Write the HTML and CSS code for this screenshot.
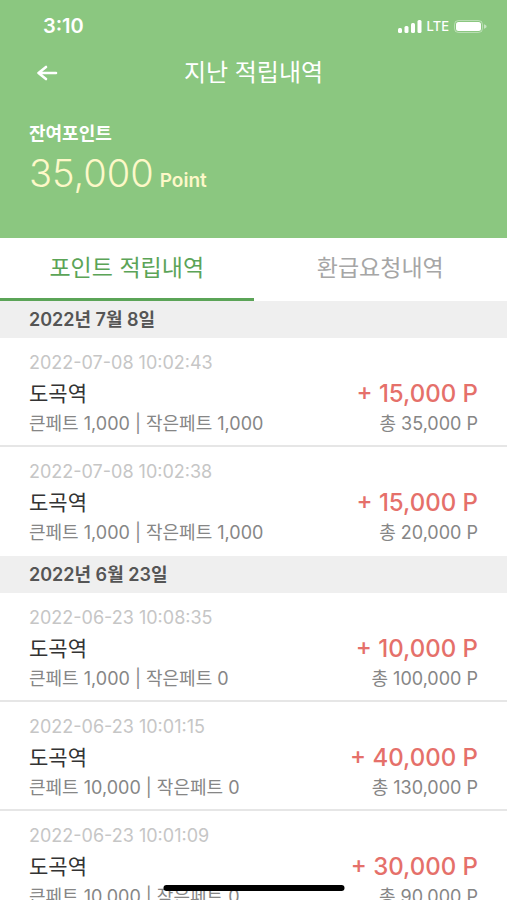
FILE: index.html
```html
<!DOCTYPE html>
<html lang="ko">
<head>
  <meta charset="UTF-8" />
  <meta name="viewport" content="width=device-width, initial-scale=1.0" />
  <title>지난 적립내역</title>
  <link rel="stylesheet" href="styles.css">
</head>
<body>
  <header class="header">
    <div class="status-bar">
      <span class="status-time">3:10</span>
      <div class="status-icons">
        <svg width="24" height="13" viewBox="0 0 24 13" fill="#fff" aria-hidden="true">
          <rect x="0" y="8" width="4" height="5" rx="1.5" />
          <rect x="6.5" y="6" width="4" height="7" rx="1.5" />
          <rect x="13" y="3" width="4" height="10" rx="1.5" />
          <rect x="19.5" y="0" width="4" height="13" rx="1.5" />
        </svg>
        <span class="status-network">LTE</span>
        <svg width="33" height="13" viewBox="0 0 33 13" aria-hidden="true">
          <rect x="0.5" y="0.5" width="28" height="12" rx="4" fill="none" stroke="#fff" stroke-opacity="0.4" />
          <rect x="2" y="2" width="25" height="9" rx="2.5" fill="#fff" />
          <path d="M30 4.2c1.6.5 2.6 1.3 2.6 2.3s-1 1.8-2.6 2.3z" fill="#fff" fill-opacity="0.5" />
        </svg>
      </div>
    </div>
    <div class="title-bar">
      <button class="back" type="button" aria-label="뒤로">
        <svg width="22" height="16" viewBox="0 0 22 16" fill="none" stroke="#fff" stroke-width="2.6" stroke-linecap="round" stroke-linejoin="round" aria-hidden="true">
          <path d="M20 8H2.500M10 2 2.500 8l7.500 6" />
        </svg>
      </button>
      <h1 class="title">지난 적립내역</h1>
    </div>
    <div class="balance">
      <p class="balance-label">잔여포인트</p>
      <p class="balance-value">35,000<span class="balance-unit">Point</span></p>
    </div>
  </header>

  <nav class="tabs">
    <a class="tab active" href="#points">포인트 적립내역</a>
    <a class="tab" href="#refunds">환급요청내역</a>
  </nav>

  <main class="history" id="points">
    <section>
      <h2 class="day">2022년 7월 8일</h2>
      <ul class="list">
        <li class="item">
          <time class="item-time">2022-07-08 10:02:43</time>
          <div class="row">
            <span class="place">도곡역</span>
            <span class="amount">+ 15,000 P</span>
          </div>
          <div class="row detail">
            <span>큰페트 1,000 | 작은페트 1,000</span>
            <span>총 35,000 P</span>
          </div>
        </li>
        <li class="item">
          <time class="item-time">2022-07-08 10:02:38</time>
          <div class="row">
            <span class="place">도곡역</span>
            <span class="amount">+ 15,000 P</span>
          </div>
          <div class="row detail">
            <span>큰페트 1,000 | 작은페트 1,000</span>
            <span>총 20,000 P</span>
          </div>
        </li>
      </ul>
    </section>
    <section>
      <h2 class="day">2022년 6월 23일</h2>
      <ul class="list">
        <li class="item">
          <time class="item-time">2022-06-23 10:08:35</time>
          <div class="row">
            <span class="place">도곡역</span>
            <span class="amount">+ 10,000 P</span>
          </div>
          <div class="row detail">
            <span>큰페트 1,000 | 작은페트 0</span>
            <span>총 100,000 P</span>
          </div>
        </li>
        <li class="item">
          <time class="item-time">2022-06-23 10:01:15</time>
          <div class="row">
            <span class="place">도곡역</span>
            <span class="amount">+ 40,000 P</span>
          </div>
          <div class="row detail">
            <span>큰페트 10,000 | 작은페트 0</span>
            <span>총 130,000 P</span>
          </div>
        </li>
        <li class="item">
          <time class="item-time">2022-06-23 10:01:09</time>
          <div class="row">
            <span class="place">도곡역</span>
            <span class="amount">+ 30,000 P</span>
          </div>
          <div class="row detail">
            <span>큰페트 10,000 | 작은페트 0</span>
            <span>총 90,000 P</span>
          </div>
        </li>
      </ul>
    </section>
  </main>
  <div class="home-indicator"></div>
</body>
</html>
```
FILE: styles.css
```css
:root {
  --green: #8bc780;
  --green-dark: #5ba457;
  --cream: #fdf8c8;
  --red: #e5706a;
  --gray: #868686;
  --gray-light: #c6c6c6;
  --side: 29px;
}

* {
  margin: 0;
  padding: 0;
  box-sizing: border-box;
}

body {
  height: 100vh;
  display: flex;
  flex-direction: column;
  overflow: hidden;
  background: #fff;
  color: #333;
  font-family: Inter, "Noto Sans CJK KR", sans-serif;
}

/* Header */
.header {
  flex: none;
  padding-bottom: 38px;
  background: var(--green);
  color: #fff;
}

.status-bar {
  display: flex;
  justify-content: space-between;
  align-items: center;
  height: 52px;
  padding: 0 20px 0 43px;
}

.status-time {
  font-size: 20px;
  font-weight: 600;
}

.status-icons {
  display: flex;
  align-items: center;
  gap: 5px;
}

.status-network {
  font-size: 13px;
  font-weight: 500;
}

.title-bar {
  display: grid;
  grid-template-columns: 66px 1fr 66px;
  align-items: center;
  height: 42px;
}

.back {
  display: flex;
  justify-content: flex-end;
  padding: 8px;
  border: 0;
  background: none;
  cursor: pointer;
}

.title {
  font-size: 24px;
  font-weight: 400;
  line-height: 34px;
  text-align: center;
}

.balance {
  padding: 28px var(--side) 0;
}

.balance-label {
  font-size: 18px;
  font-weight: 600;
  line-height: 24px;
}

.balance-value {
  color: var(--cream);
  font-size: 38px;
  font-weight: 300;
  line-height: 54px;
}

.balance-unit {
  margin-left: 6px;
  font-size: 19px;
  font-weight: 600;
  line-height: 1;
}

/* Tabs */
.tabs {
  flex: none;
  display: grid;
  grid-template-columns: 1fr 1fr;
}

.tab {
  height: 63px;
  border-bottom: 3px solid transparent;
  color: #a6a6a6;
  font-size: 23px;
  font-weight: 400;
  line-height: 60px;
  text-align: center;
  text-decoration: none;
}

.tab.active {
  border-color: var(--green-dark);
  color: var(--green-dark);
}

/* History */
.history {
  flex: 1;
  overflow-y: auto;
  scrollbar-width: none;
}

.day {
  height: 37px;
  padding: 0 var(--side);
  background: #efefef;
  color: #555;
  font-size: 18px;
  font-weight: 600;
  line-height: 38px;
}

.list {
  list-style: none;
}

.item {
  padding: 14px var(--side) 11px;
  border-bottom: 2px solid #e6e6e6;
}

.item:last-child {
  border-color: transparent;
}

.item-time {
  display: block;
  color: var(--gray-light);
  font-size: 18px;
  line-height: 22px;
}

.row {
  display: flex;
  justify-content: space-between;
  line-height: 40px;
}

.place {
  font-size: 21px;
}

.amount {
  color: var(--red);
  font-size: 24px;
  font-weight: 500;
}

.detail {
  color: var(--gray);
  font-size: 18px;
  line-height: 20px;
}

.home-indicator {
  position: fixed;
  bottom: 9px;
  left: 50%;
  width: 181px;
  height: 6px;
  border-radius: 3px;
  background: #000;
  transform: translateX(-50%);
}
```
